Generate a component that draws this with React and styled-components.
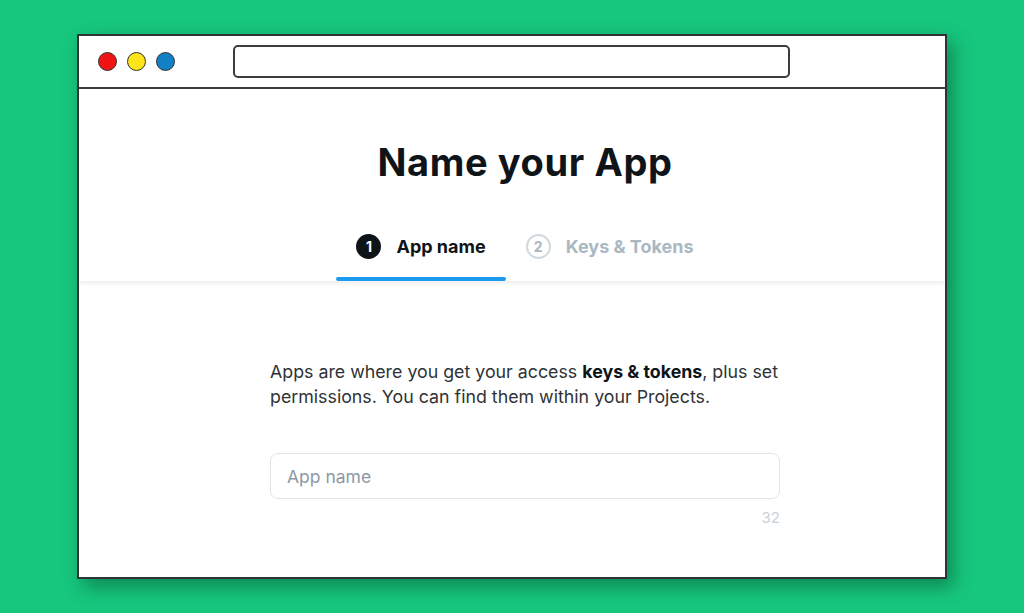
import React from "react";
import styled, { createGlobalStyle } from "styled-components";

const Global = createGlobalStyle`
  html, body { margin: 0; padding: 0; }
  body { background: #17c77e; font-family: "Inter", "Liberation Sans", Arial, sans-serif; }
  #root { height: 613px; }
`;

const Page = styled.div`
  box-sizing: border-box;
  height: 613px;
  padding: 34px 77px;
  display: flex;
`;

const Window = styled.div`
  flex: 1;
  display: flex;
  flex-direction: column;
  background: #fff;
  border: 2px solid #2f3336;
  box-shadow: 6px 8px 18px rgba(0, 60, 30, 0.45);
  overflow: hidden;
`;

const TitleBar = styled.div`
  height: 51px;
  flex: none;
  border-bottom: 2px solid #3a3d40;
  display: flex;
  align-items: center;
  padding-left: 19px;
`;

const Dots = styled.div`
  display: flex;
  gap: 10px;
`;

const Dot = styled.span`
  width: 19px;
  height: 19px;
  border-radius: 50%;
  background: ${(p) => p.$color};
  border: 1.5px solid #333;
  box-sizing: border-box;
`;

const UrlBar = styled.div`
  margin-left: 58px;
  width: 557px;
  height: 33px;
  box-sizing: border-box;
  border: 2px solid #3a3d40;
  border-radius: 5px;
`;

const Header = styled.div`
  flex: none;
  display: flex;
  flex-direction: column;
  align-items: center;
  padding-left: 26px;
  box-shadow: 0 2px 3px rgba(0, 0, 0, 0.06);
  border-bottom: 1px solid #eff1f2;
`;

const Title = styled.h1`
  margin: 50px 0 0;
  font-size: 38px;
  line-height: 46px;
  font-weight: 700;
  color: #0f1419;
  letter-spacing: 0.6px;
`;

const Tabs = styled.div`
  display: flex;
  margin-top: 49px;
`;

const Tab = styled.div`
  display: flex;
  align-items: center;
  gap: 15px;
  height: 25px;
  padding: 0 20px 22px;
  position: relative;
  font-size: 18px;
  font-weight: 700;
  color: ${(p) => (p.$active ? "#0f1419" : "#aab8c2")};
  &::after {
    content: "";
    display: ${(p) => (p.$active ? "block" : "none")};
    position: absolute;
    left: 0;
    right: 0;
    bottom: 0;
    height: 4px;
    border-radius: 2px;
    background: #1d9bf0;
  }
`;

const StepNum = styled.span`
  width: 25px;
  height: 25px;
  box-sizing: border-box;
  border-radius: 50%;
  display: flex;
  align-items: center;
  justify-content: center;
  font-size: 14px;
  font-weight: 700;
  background: ${(p) => (p.$active ? "#0f1419" : "#fff")};
  color: ${(p) => (p.$active ? "#fff" : "#aab8c2")};
  border: 2px solid ${(p) => (p.$active ? "#0f1419" : "#cfd9de")};
`;

const Content = styled.div`
  flex: 1;
  display: flex;
  justify-content: center;
  padding-left: 26px;
`;

const Form = styled.div`
  width: 510px;
  margin-top: 77px;
  display: flex;
  flex-direction: column;
`;

const Intro = styled.p`
  margin: 0;
  font-size: 17.8px;
  line-height: 25px;
  white-space: nowrap;
  color: #2f3336;
  b { color: #0f1419; font-weight: 700; }
`;

const Input = styled.input`
  margin-top: 44px;
  height: 46px;
  box-sizing: border-box;
  border: 1.5px solid #dfe4e8;
  border-radius: 8px;
  padding: 0 16px;
  font-family: inherit;
  font-size: 17.5px;
  color: #0f1419;
  outline: none;
  &::placeholder { color: #8b98a5; }
`;

const Counter = styled.div`
  margin-top: 10px;
  text-align: right;
  font-size: 15px;
  line-height: 18px;
  color: #c9d2d8;
`;

export default function App() {
  return (
    <>
      <Global />
      <Page>
        <Window>
          <TitleBar>
            <Dots>
              <Dot $color="#f01414" />
              <Dot $color="#fde41b" />
              <Dot $color="#1280c4" />
            </Dots>
            <UrlBar />
          </TitleBar>
          <Header>
            <Title>Name your App</Title>
            <Tabs>
              <Tab $active>
                <StepNum $active>1</StepNum>
                App name
              </Tab>
              <Tab>
                <StepNum>2</StepNum>
                Keys &amp; Tokens
              </Tab>
            </Tabs>
          </Header>
          <Content>
            <Form>
              <Intro>
                Apps are where you get your access <b>keys &amp; tokens</b>, plus set
                <br />
                permissions. You can find them within your Projects.
              </Intro>
              <Input placeholder="App name" />
              <Counter>32</Counter>
            </Form>
          </Content>
        </Window>
      </Page>
    </>
  );
}
